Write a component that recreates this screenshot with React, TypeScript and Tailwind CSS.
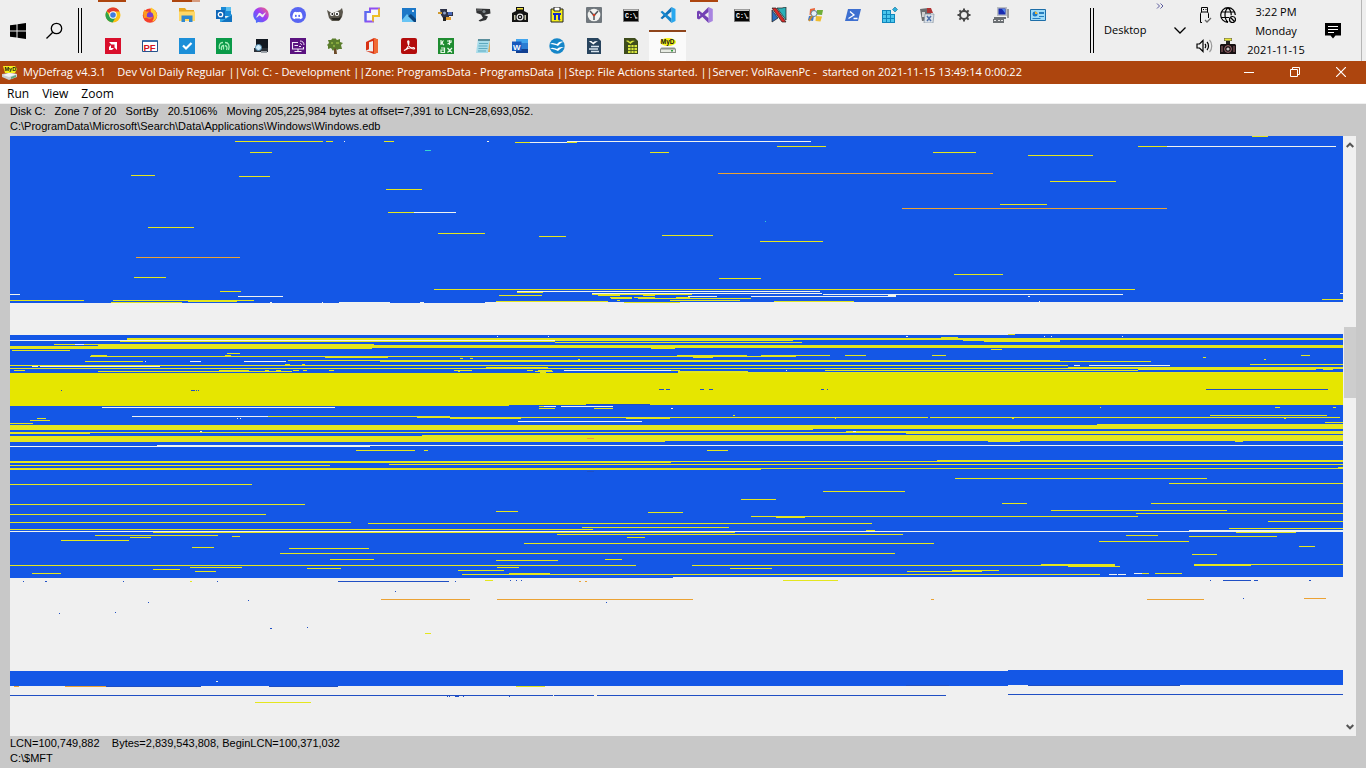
import type { ReactNode } from "react";
import { FaDiscord, FaFacebookMessenger } from "react-icons/fa";

/* ---------- cluster map data: "row: start-end start-end ..." ---------- */

const YELLOW_RUNS = `
136: 1252-1268
141: 235-323 326-333 384-394
142: 515-530 567-577
146: 777-826 1138-1167
152: 250-272 650-669 933-976
155: 1028-1093
175: 131-155
176: 239-270
181: 1050-1116
189: 386-422
204: 1000-1047
212: 388-414
227: 148-194
233: 438-485
235: 662-713
236: 539-566
241: 760-823
274: 954-1003
277: 134-166
278: 719-761
289: 434-1135
291: 220-241
292: 517-543
294: 592-692 853-888
295: 499-542 643-655 598-620
297: 610-632 634-655 676-690
298: 611-632 638-751
299: 1322-1343
300: 10-84 113-254 617-620 670-740
301: 188-237 496-608 774-854
302: 111-182 624-680
338: 127-1343
339: 127-1343
334: 1008-1015
337: 941-958
341: 120-374 450-555 984-1060 374-450
342: 555-802
340: 555-793 963-1060
344: 54-374
345: 98-1343
346: 10-1343
347: 10-1343
348: 10-372 651-675
349: 991-1002
350: 12-70
353: 227-240
355: 91-107 225-231 677-747 761-830 845-866 932-946 1301-1310
356: 90-796
357: 325-388 693-713 1203-1206
358: 460-463 470-473
359: 578-580 1264-1266
360: 288-1060
361: 85-143 380-1151
364: 285-290 302-305 1250-1343
365: 10-1068
367: 486-548 1068-1343
368: 10-1343
369: 1138-1316 1323-1333
370: 14-25 219-249 265-269 276-281 293-299 303-307 329-334 454-472 527-533 538-552 671-680 825-1138
371: 98-292 458-460 535-553 678-748
372: 540-546 678-1343
406: 539-550
408: 539-555 594-613
407: 1100-1101 1275-1280 1333-1336
415: 733-735 1210-1327
416: 163-450
417: 417-928 930-1340
418: 37-46 450-521 626-670 835-836 1012-1014 1284-1286
420: 30-50
422: 1325-1343
423: 10-33
424: 1097-1343
425: 10-1343
426: 10-1343
427: 10-1343
428: 10-1343
429: 10-813
431: 846-1343
432: 10-1343
433: 10-90 906-1343
435: 422-1343
436: 10-1343
437: 10-1343
438: 10-1343
439: 10-1343
440: 10-1343
441: 10-665 988-1020 1235-1243
450: 356-415 424-428 707-728
460: 937-1343
461: 10-1343
462: 10-671
464: 389-1343
465: 10-330
468: 10-1343
469: 10-761
467: 1338-1343
478: 955-1207
483: 1169-1343
484: 10-252
491: 823-905
499: 741-776
503: 1002-1027 1151-1343
504: 10-305
510: 1051-1227
511: 496-518
512: 648-683
513: 1136-1343
514: 10-266
516: 751-1138
517: 776-805
521: 1268-1343
522: 10-351
523: 368-872
527: 582-729
528: 1229-1343
529: 10-593
530: 866-875
532: 153-735 1236-1296
534: 557-903
535: 95-218 1126-1158
536: 232-240 1189-1277
537: 130-151 627-645
540: 61-129
541: 1099-1189
543: 524-934
546: 1299-1315
547: 192-214
548: 289-369
553: 280-895
554: 1192-1217
559: 330-374 605-622
560: 496-558
564: 1041-1115 1194-1343
565: 10-636 692-1115 1194-1251
566: 1068-1120
567: 190-242 497-519
568: 307-341 730-772
569: 153-180
570: 458-504 952-999
571: 195-216 907-982
573: 32-61 509-550 1134-1149 1155-1182
574: 462-1100
580: 485-493 783-838
581: 190-192
633: 425-431
686: 516-545
702: 255-311
`;

const WHITE_RUNS = `
141: 344-345 487-489 567-811
142: 530-567
146: 1167-1336
212: 414-456
291: 517-820
293: 592-822 1340-1343
294: 10-20 823-1123
295: 888-896
296: 238-283 688-717 751-853 853-896 1028-1030
301: 1039-1040
302: 339-390 420-424 270-272 322-323
336: 497-498 548-549 906-908 1044-1045 1051-1052 1122-1123
340: 10-555
344: 75-84
361: 190-201 244-286 145-146
365: 1074-1080 1089-1170
366: 32-38 40-160
370: 564-671 786-787
406: 544-556 561-613
407: 102-335
408: 671-673
416: 132-268
418: 237-238 240-241
421: 518-642
431: 200-202 853-856
445: 157-1343
446: 10-370
530: 1189-1343
531: 10-1343
574: 1109-1117 1118-1126
573: 1134-1142
681: 216-218
`;

const BLUE_RUNS = `
389: 659-664 666-670 700-704 709-713 821-824 827-828 1206-1328
390: 61-62 191-195 196-197 198-199
404: 586-650
471: 587-594
581: 23-24 45-47 123-124 217-218 338-449 455-456
580: 510-511 516-517 521-522 1210-1211 1223-1251 1254-1258 1309-1311
591: 395-396
598: 1243-1244
600: 248-249
602: 148-149 606-607
612: 115-116
613: 59-60
627: 307-308
628: 270-272
685: 906-949 1028-1180
686: 106-201 269-338
694: 1008-1343
695: 10-553 554-594 597-946
696: 447-448 449-450 455-459 463-464 509-510
`;

const ORANGE_RUNS = `
173: 718-993
208: 902-1167
257: 136-240
438: 587-594
581: 579-581 585-587
598: 1304-1326
599: 381-470 497-693 931-934 1147-1204
686: 14-19 65-106
`;

const CYAN_RUNS = `
150: 425-431
221: 765-766
`;

function runsToPath(runs: string): string {
  return runs
    .trim()
    .split("\n")
    .map((line) => {
      const [row, spans] = line.split(":");
      return spans
        .trim()
        .split(" ")
        .map((span) => {
          const [from, to] = span.split("-").map(Number);
          return `M${from} ${row.trim()}h${to - from}v1h${from - to}z`;
        })
        .join("");
    })
    .join("");
}

function ClusterMap() {
  return (
    <svg
      className="block h-full min-w-0 flex-1 bg-[#f0f0f0]"
      viewBox="10 136 1333 600"
      preserveAspectRatio="none"
      shapeRendering="crispEdges"
      role="img"
      aria-label="Disk cluster map"
    >
      <path
        fill="#1457e6"
        d="M10 136H1343V302H485V303H10zM10 335H1015V334H1343V577H673V578H10zM10 671H1008V670H1343V685H1008V686H10z"
      />
      <path fill="#e6e600" d="M10 373H1343V405H509V406H10z" />
      <path fill="#e4e61e" d={runsToPath(YELLOW_RUNS)} />
      <path fill="#f0f4ee" d={runsToPath(WHITE_RUNS)} />
      <path fill="#1f4fc4" d={runsToPath(BLUE_RUNS)} />
      <path fill="#eba234" d={runsToPath(ORANGE_RUNS)} />
      <path fill="#35d6d0" d={runsToPath(CYAN_RUNS)} />
    </svg>
  );
}

/* ---------- icons ---------- */

function Icon({ children }: { children: ReactNode }) {
  return (
    <svg className="block size-4" viewBox="0 0 16 16" aria-hidden="true">
      {children}
    </svg>
  );
}

const chrome = (
  <Icon>
    <circle cx="8" cy="8" r="7.500" fill="#fbc116" />
    <path d="M8 8 1.500 4.200A7.500 7.500 0 0 1 14.500 4.500H8z" fill="#e33b2e" />
    <path d="M1.500 4.200A7.500 7.500 0 0 0 7.600 15.500L11 9.800 8 8 5 9.800z" fill="#2da14c" />
    <circle cx="8" cy="8" r="3.700" fill="#fff" />
    <circle cx="8" cy="8" r="2.800" fill="#3f7de0" />
  </Icon>
);
const firefox = (
  <Icon>
    <circle cx="8" cy="8.600" r="7.200" fill="#f5402c" />
    <path d="M9 .5c3 1.500 6.300 4.500 6 8.500-.3 3-2.500 5-5 5.600C13 11 12 8 9.500 6.500 8.500 4.500 8.400 2.500 9 .5z" fill="#ffcb2e" />
    <path d="M1 5.500 2.500 2.500 4 4.600 7 4.500 5.500 7 9 8 6.500 10.500 2 11z" fill="#ff9a1f" />
    <circle cx="8" cy="8.500" r="3.200" fill="#7b3fd0" />
    <path d="M3.500 8c2 3 5 3 7.500 1.500-1 3-6 4-7.500-1.500z" fill="#ff8a1c" />
  </Icon>
);
const explorer = (
  <Icon>
    <path d="M0 1h6l1.500 2H15v10H0z" fill="#e8a820" />
    <path d="M0 4.500h16V14H0z" fill="#ffd866" />
    <path d="M2.500 8.500h11V15H10v-3H6v3H2.500z" fill="#2f88cf" />
  </Icon>
);
const outlook = (
  <Icon>
    <path d="M5 0h10v9H5z" fill="#1a8ad6" />
    <path d="M10 0h5v4h-5z" fill="#5bc0f0" />
    <path d="M4 7l6 4 6-4v8H4z" fill="#32a8e8" />
    <path d="M16 8v7H5z" fill="#1273c0" />
    <rect x="0" y="3" width="9" height="9" fill="#0f67b8" />
    <circle cx="4.500" cy="7.500" r="2.200" fill="none" stroke="#fff" strokeWidth="1.300" />
  </Icon>
);
const messenger = (
  <svg className="block size-4" viewBox="0 0 16 16" aria-hidden="true">
    <defs>
      <linearGradient id="messenger-fill" x1="0" y1="1" x2="1" y2="0">
        <stop offset="0" stopColor="#2a7bff" />
        <stop offset=".55" stopColor="#a23cf4" />
        <stop offset="1" stopColor="#ff6a6c" />
      </linearGradient>
    </defs>
    <FaFacebookMessenger size={16} color="url(#messenger-fill)" fill="url(#messenger-fill)" />
  </svg>
);
const discord = (
  <span className="flex size-4 items-center justify-center rounded-full bg-[#5865f2]">
    <FaDiscord className="size-[11px] text-white" aria-hidden="true" />
  </span>
);
const gimp = (
  <Icon>
    <path d="M0 3l3 2 4 .5L13 3l2-2 1 4-1 5-3 4H5L2 11z" fill="#5a564c" />
    <circle cx="5" cy="7" r="2" fill="#fff" />
    <circle cx="10" cy="6.800" r="2.200" fill="#fff" />
    <circle cx="5.300" cy="7" r=".9" fill="#111" />
    <circle cx="10" cy="7" r="1" fill="#111" />
    <path d="M4 11h8l2-2-1 4H6z" fill="#26241f" />
  </Icon>
);
const snip = (
  <Icon>
    <path d="M1.500 5H6V1.500h9V9H9v5.500H1.500z" fill="#f6f6fb" stroke="#8f4ff0" strokeWidth="2" />
    <path d="M1.500 14.500V5H6" fill="none" stroke="#5a6cf0" strokeWidth="2" />
    <path d="M9 14.500V9h6V1.500" fill="none" stroke="#f0c020" strokeWidth="1.800" />
  </Icon>
);
const photos = (
  <Icon>
    <path d="M1 1h14v14H1z" fill="#1c78c8" />
    <path d="M1 13l5-6 8 8H1z" fill="#68c4f4" />
    <path d="M7 9l3-2 5 5v3h-2z" fill="#0c447e" />
    <circle cx="12" cy="4" r="1" fill="#fff" />
  </Icon>
);
const webcamTool = (
  <Icon>
    <path d="M2 2h7v3h6v4h-4v2H5L3 8z" fill="#2d3248" />
    <path d="M0 5h4v2H0z" fill="#d09a30" />
    <path d="M8 10h5v3H8z" fill="#e09a30" />
    <path d="M10 5h4v3h-4z" fill="#4868b8" />
    <path d="M5 10h3v4H5z" fill="#222" />
    <circle cx="6.500" cy="6" r="1.500" fill="#8fa2c8" />
  </Icon>
);
const webcam = (
  <Icon>
    <path d="M1 1.500l14 .5.500 4.500L9 8l4 1.500-2 3.500-6 1.500-1.500-1L8 11 6 7.500 1.500 6z" fill="#303234" />
    <circle cx="9" cy="4.500" r="1.600" fill="#7d868a" />
    <path d="M2 2.500h5v1H2z" fill="#777" />
  </Icon>
);
const camera = (
  <Icon>
    <path d="M4 0h8v4H4z" fill="#111" />
    <path d="M5 1h6v1.500H5z" fill="#f4e63a" />
    <path d="M0 6l4-2h8l4 2v9H0z" fill="#141414" />
    <circle cx="8" cy="10" r="3.500" fill="#f0f0f0" />
    <circle cx="8" cy="10" r="2.300" fill="#111" />
    <path d="M2 8h1.500v5H2zM12.500 8H14v5h-1.500z" fill="#c2c2a8" />
    <circle cx="8" cy="10" r=".9" fill="#fff" />
  </Icon>
);
const trayCamera = (
  <Icon>
    <path d="M4 0h8v3H4z" fill="#555" />
    <path d="M4.500 .5h7v2h-7z" fill="#ece83a" />
    <path d="M6 3h4v3H6z" fill="#222" />
    <path d="M1 6h14l1 1v9H0V7z" fill="#171012" />
    <circle cx="8" cy="11" r="3.400" fill="none" stroke="#a06a70" />
    <circle cx="8" cy="11" r="1.600" fill="#cfc6c8" />
    <path d="M2 8v6M14 8v6" stroke="#a06a70" />
  </Icon>
);
const piClip = (
  <Icon>
    <path d="M2 2h12v13H2z" fill="#f6ef1c" stroke="#222" />
    <path d="M5 0h6v4H5z" fill="#fff" stroke="#222" />
    <path d="M4 7h8M6 7v6M10 7v5l1 1" fill="none" stroke="#1428c8" strokeWidth="2" />
  </Icon>
);
const clock = (
  <Icon>
    <rect width="16" height="16" rx="1" fill="#70777d" />
    <circle cx="8" cy="8" r="6.300" fill="#f1f2f0" />
    <path d="M4 4l4 4.500L12 4M8 8v5" fill="none" stroke="#50565b" strokeWidth="1.500" />
    <circle cx="8" cy="8" r="1.300" fill="#d03c20" />
  </Icon>
);
const cmd = (
  <Icon>
    <path d="M.5 2.500h15v12H.5z" fill="#050505" stroke="#777" />
    <path d="M1 2.500h14v1.500H1z" fill="#c7c7c7" />
    <text x="2" y="11" fill="#fff" fontSize="6.500" fontWeight="bold" fontFamily="Liberation Mono, monospace">
      C:\
    </text>
    <path d="M12 11h2.500" stroke="#fff" />
  </Icon>
);
const vscode = (
  <Icon>
    <path d="M11.500 0 15.500 2v12l-4 2z" fill="#28a8ef" />
    <path d="M11.500 0v4.500L2.200 12.300.5 11z" fill="#0f72ba" />
    <path d="M11.500 16v-4.500L2.200 3.700.5 5z" fill="#1687ce" />
  </Icon>
);
const visualStudio = (
  <Icon>
    <path d="M11.500 0 15.800 2v12l-4.300 2z" fill="#a884e0" />
    <path d="M0 4.500 2 3.500 11.500 11v5L2 6.500v3L11.500 0v5L2 12.500 0 11.500z" fill="#7340b4" />
  </Icon>
);
const nShape = (
  <Icon>
    <path d="M6 1h5l4-1v13z" fill="#2ab0b8" stroke="#1d1d1d" strokeWidth=".7" />
    <path d="M1 3l6 8-6 4z" fill="#2a6fc0" stroke="#1d1d1d" strokeWidth=".7" />
    <path d="M1 1l4 0 10 14h-4z" fill="#d92a28" stroke="#1d1d1d" strokeWidth=".7" />
  </Icon>
);
const winFlag = (
  <Icon>
    <path d="M2 2l5-1-.5 6-5 1z" fill="#e9663a" />
    <path d="M9 3h6l-1 5-5.500-.5z" fill="#6fae3a" />
    <path d="M1 9l5-.5L5 14l-5-1z" fill="#3f76c9" />
    <path d="M8 9l6 .5-1.500 5-5-.5z" fill="#eebc30" />
    <circle cx="6" cy="6.500" r="3" fill="#e5f1fa" stroke="#6a7f93" />
    <path d="M4 9l-3 5" stroke="#c58b32" strokeWidth="2" />
  </Icon>
);
const powershell = (
  <Icon>
    <path d="M3 2h13l-3 12H0z" fill="#3d6fd0" />
    <path d="M5 4.500 9 8l-5.500 3.500M8.500 11.500h4" fill="none" stroke="#fff" strokeWidth="1.300" />
  </Icon>
);
const registry = (
  <Icon>
    <path d="M0 3h13v13H0z" fill="#0f86bc" />
    <path d="M1 4h3v3H1zM5 4h3v3H5zM1 8h3v3H1zM5 8h3v3H5zM9 8h3v3H9zM1 12h3v3H1zM5 12h3v3H5zM9 12h3v3H9z" fill="#4cc6ec" />
    <path d="M9 2h4v5H9z" fill="#eeeeee" />
    <path d="M13 0l2.500 2.500L13 5l-2.500-2.500z" fill="#2cb0dc" stroke="#126f96" strokeWidth=".6" />
  </Icon>
);
const bookTool = (
  <Icon>
    <path d="M1 2l8-1 3 3v9l-9 1z" fill="#6b6d70" />
    <path d="M8 1h4l2 5H8z" fill="#b03434" />
    <path d="M3 5h3v5H3z" fill="#d0d0d0" />
    <path d="M6 7h9l-1 9H5z" fill="#dce2e8" stroke="#8492a0" strokeWidth=".7" />
    <path d="M8 9l4 5M12 9l-4 5" stroke="#4b6ea8" strokeWidth="1.500" />
  </Icon>
);
const gear = (
  <Icon>
    <circle cx="8" cy="8" r="4" fill="none" stroke="#484848" strokeWidth="2" />
    <path d="M8 1.500V4M8 12v2.500M1.500 8H4M12 8h2.500M3.400 3.400l1.700 1.700M10.900 10.900l1.700 1.700M12.600 3.400l-1.700 1.700M5.100 10.900l-1.700 1.700" stroke="#484848" strokeWidth="2" />
  </Icon>
);
const computer = (
  <Icon>
    <path d="M4 0h10v9H4z" fill="#b9bdc2" />
    <path d="M5.500 1.500h7v6h-7z" fill="#1a2cb0" />
    <path d="M9 2h3v4z" fill="#4f86ec" />
    <path d="M14 2h2v9h-2z" fill="#9b9b9b" />
    <path d="M1 10h12v2H1zM0 12h11v4H0z" fill="#6b6f73" />
    <path d="M1 13h2v1H1zM5 13h2v1H5zM8 13h2v1H8z" fill="#e8e8e8" />
  </Icon>
);
const controlPanel = (
  <Icon>
    <path d="M.5 2.500h15v11H.5z" fill="#9fdcf8" stroke="#1d6ea8" />
    <circle cx="5" cy="7" r="2.500" fill="#1c7cc8" />
    <path d="M5 7V4.500A2.500 2.500 0 0 1 7.500 7z" fill="#f5b62c" />
    <path d="M9 5h5v2H9zM9 9h5v1H9zM2.500 11h8v1h-8z" fill="#277fc0" />
  </Icon>
);

const amd = (
  <Icon>
    <path d="M0 0h16v16H0z" fill="#d90f2c" />
    <path d="M4 4h8v8L9.500 9.500v-3h-3z" fill="#fff" />
    <path d="M4 9l2-2v3h3l-2 2H4z" fill="#fff" />
  </Icon>
);
const pf = (
  <Icon>
    <path d="M.5 2.500h15v11H.5z" fill="#fff" stroke="#26528c" />
    <path d="M1 2h14v2H1z" fill="#3a6ea8" />
    <text x="1.500" y="12.500" fill="#d8141c" fontSize="9.500" fontWeight="bold" fontFamily="Liberation Sans, sans-serif">
      PF
    </text>
  </Icon>
);
const todo = (
  <Icon>
    <path d="M0 0h16v16H0z" fill="#1c8fd8" />
    <path d="M4 7.500l3 3L12.500 5" fill="none" stroke="#fff" strokeWidth="2.200" />
  </Icon>
);
const greenTool = (
  <Icon>
    <path d="M0 0h16v16H0z" fill="#0a9a48" />
    <path d="M3.500 11C2.500 7 4 4.500 7 4.500M5.500 12C5 9 5.500 7.500 7.500 7.500v4M9 4.500c3.500 0 5 3 3.500 7.500M9 7.500c2 .5 2.500 2 1.500 4.500" fill="none" stroke="#a6ecb8" strokeWidth="1.300" />
  </Icon>
);
const scanner = (
  <Icon>
    <path d="M3 1h12v9H3z" fill="#121820" />
    <path d="M1 10h14v4H1z" fill="#2b3138" />
    <circle cx="5.500" cy="9.500" r="3" fill="#cfeaf8" stroke="#4f86a8" />
    <path d="M8 13h6v2H8z" fill="#9aa0a6" />
  </Icon>
);
const remote = (
  <Icon>
    <path d="M0 0h16v16H0z" fill="#5b1380" />
    <path d="M8 4.500H2.500v6.500h11V9M4.500 13.500h7M8 11v2.500M4.500 7.500H8M9 8.500h2" fill="none" stroke="#f2e8f8" strokeWidth="1.100" />
    <path d="M10 3c2.500 0 4 1.500 4 4M10 5.500c1 0 1.500.5 1.500 1.500" fill="none" stroke="#f2e8f8" />
  </Icon>
);
const tree = (
  <Icon>
    <path d="M7 8h2l1 8H7z" fill="#6b4a28" />
    <path d="M8 0l2 2 3-1v3l3 1-2 2 1 4h-3l-2 1-2-2-2 3-2-3-3 1v-3L0 7l2-2-1-3h3l2-2 1 1z" fill="#5a7d2c" />
    <path d="M4 4h2v2H4zM9 4h3v2H9zM6 7h2v2H6z" fill="#86a83c" />
  </Icon>
);
const office = (
  <Icon>
    <path d="M2 4l8-4 4 1.500v13L10 16l-8-3 7 .5V3L5 4.200v7L2 12.500z" fill="#d83214" />
    <path d="M10 0l4 1.500v13L10 16z" fill="#f06a34" />
  </Icon>
);
const acrobat = (
  <Icon>
    <rect width="16" height="16" rx="2" fill="#b30c0c" />
    <path d="M3 12.500c3-1 5-5 5-8.500 0-1.500-1.500-1.500-1.300 0C7 8 10 11 13 11c1.200-.4.500-1.600-1-1.500-3 0-6 1-9 3z" fill="none" stroke="#fff" strokeWidth="1.100" />
  </Icon>
);
const charTool = (
  <Icon>
    <path d="M0 0h16v16H0z" fill="#1e8c30" />
    <path d="M3 2v5M3 4.500h2M5.500 2.500 3.500 5l2.500 2M9 3h5M11.500 2v5M9.500 6l4-2M3 10h3.500v4.500H3V12h3M9.500 10l4.500 4.500M14 10l-4.500 4.500" fill="none" stroke="#e8f8e8" strokeWidth="1.200" />
  </Icon>
);
const notepad = (
  <Icon>
    <path d="M3 1h12l-2 14H1z" fill="#a8dcea" />
    <path d="M3 1h12v2H3z" fill="#5b8e9c" />
    <path d="M4 5.500h9M3.500 8h9M3.500 10.500h9M3 13h8" stroke="#5da9bf" />
    <path d="M15 2v12h-2z" fill="#d4a860" />
  </Icon>
);
const word = (
  <Icon>
    <path d="M4 1h12v14H4z" fill="#2b7cd3" />
    <path d="M4 1h12v4H4z" fill="#41a5ee" />
    <path d="M4 11h12v4H4z" fill="#103f91" />
    <path d="M0 3.500h9.500V13H0z" fill="#185abd" />
    <text x="1" y="11.500" fill="#fff" fontSize="8" fontWeight="bold" fontFamily="Liberation Sans, sans-serif">
      W
    </text>
  </Icon>
);
const openOffice = (
  <Icon>
    <circle cx="8" cy="8" r="7.700" fill="#1686c8" />
    <path d="M1 6c3-2 5 0 7 0 2-3 5-3 7-2-3 0-4 2-6 4-2-1-5-2-8-2zM1 10.500c3-1.500 5 0 7 .5 2-2 4-2 7-2-3 1-4 2-6 4-2-1-5-2-8-2.500z" fill="#fff" />
  </Icon>
);
const writer = (
  <Icon>
    <path d="M1 0h11l3 3v13H1z" fill="#28445e" />
    <path d="M3 3.500c2-1 3 0 4 1 1.500-1.500 3-1.500 5-1-2 .5-3 1.500-4.500 3C6 5.500 5 4.500 3 3.500z" fill="#fff" />
    <path d="M5 8.500h8M3 11h9M5 13.500h8" fill="none" stroke="#d8e4ee" strokeWidth="1.300" />
  </Icon>
);
const calc = (
  <Icon>
    <path d="M1 0h11l3 3v13H1z" fill="#3e4c1c" />
    <path d="M3 3c2-1 3 0 4 1 1.500-1.500 3-1.500 5-1-2 .5-3 1.500-4.500 3C6 5 5 4 3 3zM5 7h9v8H5z" fill="#d8e63c" />
    <path d="M8 7v8M11 7v8M5 9.500h9M5 12.500h9" stroke="#3e4c1c" strokeWidth=".8" />
  </Icon>
);
const myDefrag = (
  <Icon>
    <ellipse cx="8" cy="4" rx="8" ry="4" fill="#f4f01a" />
    <text x="0.800" y="6.300" fill="#111" fontSize="6.500" fontWeight="bold" fontFamily="Liberation Sans, sans-serif">
      MyD
    </text>
    <path d="M0 11l1.500-1.500h13L16 11v4H0z" fill="#8d928a" />
    <path d="M1 11.500h14v2.500H1z" fill="#e7ebe2" />
    <path d="M11 12h2v1.500h-2z" fill="#2e9c3a" />
  </Icon>
);
const titleIcon = (
  <Icon>
    <path d="M1 1h12l2 3-2 4H3z" fill="#f4ee1c" />
    <text x="2.500" y="6" fill="#111" fontSize="5.500" fontWeight="bold" fontFamily="Liberation Sans, sans-serif">
      MyD
    </text>
    <path d="M0 9l7-1 8 1v3l-8 3-7-3z" fill="#c9ced2" />
    <path d="M1 10l6 2 8-3-8-1z" fill="#f4f4f4" />
    <path d="M9 12l5-2v2l-5 2z" fill="#5fa87a" />
  </Icon>
);

type Launcher = { name: string; icon: ReactNode; mark?: "open" | "group" | "active" };

const TOP_ROW: Launcher[] = [
  { name: "Google Chrome", icon: chrome, mark: "open" },
  { name: "Firefox", icon: firefox },
  { name: "File Explorer", icon: explorer, mark: "group" },
  { name: "Outlook", icon: outlook },
  { name: "Messenger", icon: messenger },
  { name: "Discord", icon: discord },
  { name: "GIMP", icon: gimp },
  { name: "Snip", icon: snip },
  { name: "Photos", icon: photos },
  { name: "Webcam tool", icon: webcamTool },
  { name: "Webcam", icon: webcam },
  { name: "Camera", icon: camera },
  { name: "Clipboard", icon: piClip },
  { name: "Clock", icon: clock },
  { name: "Command Prompt", icon: cmd },
  { name: "Visual Studio Code", icon: vscode },
  { name: "Visual Studio", icon: visualStudio, mark: "open" },
  { name: "Developer Prompt", icon: cmd },
  { name: "Network tool", icon: nShape },
  { name: "Windows search", icon: winFlag },
  { name: "PowerShell", icon: powershell },
  { name: "Registry Editor", icon: registry },
  { name: "Reference", icon: bookTool },
  { name: "Settings", icon: gear },
  { name: "Computer", icon: computer },
  { name: "Control Panel", icon: controlPanel },
];

const BOTTOM_ROW: Launcher[] = [
  { name: "AMD Software", icon: amd },
  { name: "PF", icon: pf },
  { name: "To Do", icon: todo },
  { name: "Green tool", icon: greenTool },
  { name: "Scanner", icon: scanner },
  { name: "Remote", icon: remote },
  { name: "Family tree", icon: tree },
  { name: "Office", icon: office },
  { name: "Acrobat", icon: acrobat },
  { name: "Character tool", icon: charTool },
  { name: "Notepad", icon: notepad },
  { name: "Word", icon: word },
  { name: "OpenOffice", icon: openOffice },
  { name: "Writer", icon: writer },
  { name: "Calc", icon: calc },
  { name: "MyDefrag", icon: myDefrag, mark: "active" },
];

function LauncherButton({ item }: { item: Launcher }) {
  const active = item.mark === "active";
  return (
    <button
      type="button"
      aria-label={item.name}
      className={`relative flex h-full w-[37px] items-center justify-center ${active ? "bg-[#fafafa]" : ""}`}
    >
      {item.mark === "open" && <span className="absolute top-0 left-1 h-0.5 w-7 bg-[#ad450e]" />}
      {item.mark === "group" && (
        <span className="absolute top-0 left-1 flex h-0.5 w-7">
          <span className="w-5 bg-[#ad450e]" />
          <span className="w-2 bg-[#d69b7e]" />
        </span>
      )}
      {active && <span className="absolute inset-x-0 top-0 h-0.5 bg-[#8f451c]" />}
      {item.icon}
    </button>
  );
}

function Grip() {
  return <span className="h-[45px] w-1 shrink-0 border-x border-black" />;
}

function Taskbar() {
  return (
    <header className="flex h-[61px] shrink-0 items-center bg-[#eeeeee] text-[11px] text-black">
      <button type="button" aria-label="Start" className="flex h-full w-9 shrink-0 items-center justify-center">
        <svg className="size-4" viewBox="0 0 16 16" aria-hidden="true">
          <path d="M0 2.300 6.500 1.400V7.500H0zM7.500 1.200 16 0v7.500H7.500zM0 8.500h6.500v6.100L0 13.700zM7.500 8.500H16V16l-8.500-1.200z" />
        </svg>
      </button>
      <button type="button" aria-label="Search" className="flex h-full w-9 shrink-0 items-center justify-center">
        <svg className="size-[18px]" viewBox="0 0 18 18" fill="none" stroke="black" strokeWidth="1.300" aria-hidden="true">
          <circle cx="11.500" cy="6.500" r="5.200" />
          <path d="M7.800 10.200 1.500 16.500" />
        </svg>
      </button>
      <span className="w-1.5 shrink-0" />
      <Grip />
      <nav aria-label="Taskbar" className="ml-3 flex h-full min-w-0 flex-1 flex-col overflow-hidden">
        <div className="flex h-[30px] shrink-0">
          {TOP_ROW.map((item) => (
            <LauncherButton key={item.name} item={item} />
          ))}
        </div>
        <div className="flex h-[31px] shrink-0">
          {BOTTOM_ROW.map((item) => (
            <LauncherButton key={item.name} item={item} />
          ))}
        </div>
      </nav>
      <Grip />
      <div className="flex h-full shrink-0 items-center pl-2.5">
        <span className="w-[52px]">Desktop</span>
        <button type="button" aria-label="More items" className="flex h-full w-3 flex-col pt-0.5 text-[#5b5b9c]">
          <svg className="block size-2" viewBox="0 0 8 8" fill="none" stroke="currentColor" aria-hidden="true">
            <path d="M1 1.500 3.500 4 1 6.500M4.500 1.500 7 4 4.500 6.500" />
          </svg>
        </button>
        <button type="button" aria-label="Show desktop items" className="flex h-full w-6 items-center justify-center">
          <svg className="h-[7px] w-3" viewBox="0 0 12 7" fill="none" stroke="black" strokeWidth="1.300" aria-hidden="true">
            <path d="M.5 .5 6 6 11.500 .5" />
          </svg>
        </button>
      </div>
      <div className="grid h-full shrink-0 grid-cols-2 grid-rows-2">
        <button type="button" aria-label="Eject hardware" className="flex w-6 items-center justify-center">
          <svg className="size-4" viewBox="0 0 16 16" fill="none" stroke="black" aria-hidden="true">
            <path d="M5.500 5V.5h6V5M6 15.500H4.500v-9L5.500 5h6l1 1.500V11" />
            <path d="M7 2.500h1M9.500 2.500h1" />
            <path d="M9 13l2 2 4-4" stroke="#666" strokeWidth="1.300" />
          </svg>
        </button>
        <button type="button" aria-label="Network" className="flex w-6 items-center justify-center">
          <svg className="size-4" viewBox="0 0 16 16" fill="none" stroke="black" strokeWidth="1.200" aria-hidden="true">
            <path d="M8 15.300A7.300 7.300 0 1 1 15.300 8M1 5h14M1 10.500h8M8 .7C4 4 4 12 8 15.300M8 .7c2.500 2 3.300 5 3.200 7.500" />
            <circle cx="12.500" cy="12.500" r="3" />
            <path d="M10.500 10.500l4 4" />
          </svg>
        </button>
        <button type="button" aria-label="Volume" className="flex w-6 items-center justify-center">
          <svg className="h-4 w-[17px]" viewBox="0 0 17 16" fill="none" stroke="black" strokeWidth="1.200" aria-hidden="true">
            <path d="M1 6h2.500L7 2.500v11L3.500 10H1zM9 6c1 1 1 3 0 4M11 4c2 2 2 6 0 8" />
            <path d="M13.500 2c3 3 3 9 0 12" stroke="#999" />
          </svg>
        </button>
        <button type="button" aria-label="Camera" className="flex w-6 items-center justify-center">
          {trayCamera}
        </button>
      </div>
      <time className="flex w-[72px] shrink-0 flex-col text-center leading-[19px]" dateTime="2021-11-15T15:22">
        <span>3:22 PM</span>
        <span>Monday</span>
        <span>2021-11-15</span>
      </time>
      <button type="button" aria-label="Notifications" className="flex h-full w-[42px] shrink-0 items-center justify-center">
        <svg className="size-4" viewBox="0 0 16 16" aria-hidden="true">
          <path d="M0 0h16v12.500h-5.500L8 15.500 5.500 12.500H0z" />
          <path d="M3 3.500h10M3 6.500h10M3 9.500h6" stroke="white" />
        </svg>
      </button>
      <span className="h-full w-[7px] shrink-0" />
      <span className="h-full w-[5px] shrink-0 border-l border-[#b5b5b5]" />
    </header>
  );
}

function TitleBar() {
  return (
    <div className="flex h-[23px] shrink-0 items-center bg-[#ad450e] px-0.5 text-white">
      {titleIcon}
      <h1 className="ml-[5px] min-w-0 flex-1 truncate text-[11px] whitespace-pre">
        {
          "MyDefrag v4.3.1    Dev Vol Daily Regular ||Vol: C: - Development ||Zone: ProgramsData - ProgramsData ||Step: File Actions started. ||Server: VolRavenPc -  started on 2021-11-15 13:49:14 0:00:22"
        }
      </h1>
      <button type="button" aria-label="Minimize" className="flex h-full w-[46px] items-center justify-center pb-0.5">
        <svg className="size-2.5" viewBox="0 0 10 10" stroke="white" aria-hidden="true">
          <path d="M0 5.500h10" />
        </svg>
      </button>
      <button type="button" aria-label="Restore" className="flex h-full w-[46px] items-center justify-center pb-0.5">
        <svg className="size-2.5" viewBox="0 0 10 10" fill="none" stroke="white" aria-hidden="true">
          <path d="M.5 2.500h7v7h-7zM2.500 2.500v-2h7v7h-2" />
        </svg>
      </button>
      <button type="button" aria-label="Close" className="flex h-full w-[46px] items-center justify-center pb-0.5">
        <svg className="size-2.5" viewBox="0 0 10 10" stroke="white" strokeWidth="1.200" aria-hidden="true">
          <path d="M0 0l10 10M10 0 0 10" />
        </svg>
      </button>
    </div>
  );
}

function ScrollBar() {
  return (
    <div className="flex w-[13px] shrink-0 flex-col bg-[#f0f0f0]">
      <button type="button" aria-label="Scroll up" className="flex h-[18px] items-center justify-center">
        <svg className="h-1.5 w-2" viewBox="0 0 8 6" fill="none" stroke="#555" strokeWidth="2" aria-hidden="true">
          <path d="M.7 5 4 1.700 7.300 5" />
        </svg>
      </button>
      <div className="flex-[173]" />
      <div className="ml-px h-[71px] bg-[#cdcdcd]" />
      <div className="flex-[320]" />
      <button type="button" aria-label="Scroll down" className="flex h-[18px] items-center justify-center">
        <svg className="h-1.5 w-2" viewBox="0 0 8 6" fill="none" stroke="#555" strokeWidth="2" aria-hidden="true">
          <path d="M.7 1 4 4.300 7.300 1" />
        </svg>
      </button>
    </div>
  );
}

export default function App() {
  return (
    <div className="flex h-screen flex-col overflow-hidden bg-[#c8c8c8] font-['Open_Sans','Noto_Sans',sans-serif] text-black">
      <Taskbar />
      <TitleBar />
      <nav aria-label="Menu" className="flex h-5 shrink-0 items-center gap-[13px] border-b border-[#f0f0f0] bg-white pl-[7px] text-xs">
        <button type="button">Run</button>
        <button type="button">View</button>
        <button type="button">Zoom</button>
      </nav>
      <main className="flex min-h-0 flex-1 flex-col px-2.5 font-['Liberation_Sans',Arial,sans-serif] text-[11px] leading-[15px] whitespace-pre">
        <div className="h-8 shrink-0">
          <p>{"Disk C:   Zone 7 of 20   SortBy   20.5106%   Moving 205,225,984 bytes at offset=7,391 to LCN=28,693,052."}</p>
          <p>{"C:\\ProgramData\\Microsoft\\Search\\Data\\Applications\\Windows\\Windows.edb"}</p>
        </div>
        <div className="flex min-h-0 flex-1">
          <ClusterMap />
          <ScrollBar />
        </div>
        <div className="h-8 shrink-0">
          <p>{"LCN=100,749,882    Bytes=2,839,543,808, BeginLCN=100,371,032"}</p>
          <p>{"C:\\$MFT"}</p>
        </div>
      </main>
    </div>
  );
}
